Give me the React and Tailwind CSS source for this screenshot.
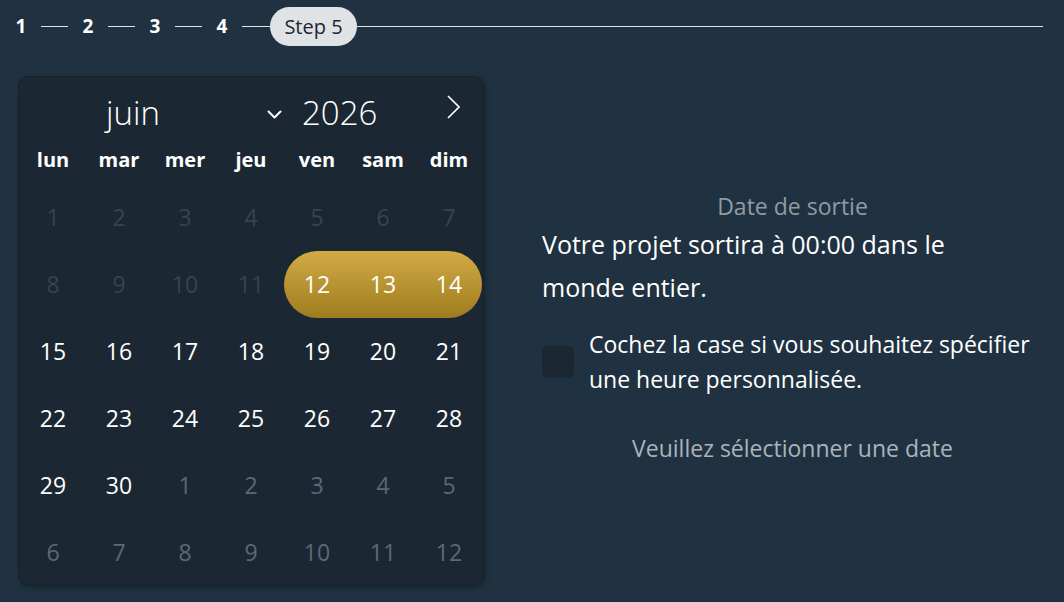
import React from "react";

const font = { fontFamily: "'Open Sans', 'Noto Sans', sans-serif" };

function ChevronDown() {
  return (
    <svg width="15" height="9" viewBox="0 0 15 9" fill="none">
      <path d="M1.5 1.5 L7.5 7.5 L13.5 1.5" stroke="white" strokeWidth="2" strokeLinecap="round" strokeLinejoin="round" />
    </svg>
  );
}
function ChevronRight() {
  return (
    <svg width="13" height="24" viewBox="0 0 13 24" fill="none">
      <path d="M1 1 L12 12 L1 23" stroke="white" strokeWidth="1.6" />
    </svg>
  );
}

const days = ["lun", "mar", "mer", "jeu", "ven", "sam", "dim"];

const rows = [
  [[1, "d"], [2, "d"], [3, "d"], [4, "d"], [5, "d"], [6, "d"], [7, "d"]],
  [[8, "d"], [9, "d"], [10, "d"], [11, "d"], [12, "s"], [13, "s"], [14, "s"]],
  [[15, "n"], [16, "n"], [17, "n"], [18, "n"], [19, "n"], [20, "n"], [21, "n"]],
  [[22, "n"], [23, "n"], [24, "n"], [25, "n"], [26, "n"], [27, "n"], [28, "n"]],
  [[29, "n"], [30, "n"], [1, "o"], [2, "o"], [3, "o"], [4, "o"], [5, "o"]],
  [[6, "o"], [7, "o"], [8, "o"], [9, "o"], [10, "o"], [11, "o"], [12, "o"]],
];

function Step({ n }) {
  return <span className="text-[19px] font-bold text-white w-[10px] flex justify-center">{n}</span>;
}
function Line() {
  return <span className="ml-[15px] mr-[15px] w-[27px] h-px bg-[#dfe3e6]" />;
}

export default function App() {
  return (
    <div style={font} className="w-[1064px] h-[602px] bg-[#203241] overflow-hidden">
      <div className="flex items-center pl-[16px] pr-[21px] pt-[7px] h-[46px]">
        <Step n="1" />
        <Line />
        <Step n="2" />
        <Line />
        <Step n="3" />
        <Line />
        <Step n="4" />
        <span className="ml-[15px] w-[28px] h-px bg-[#dfe3e6]" />
        <span className="h-[39px] w-[87px] justify-center rounded-full bg-[#dfe3e5] text-[#1c2630] text-[20px] font-medium flex items-center">Step 5</span>
        <span className="flex-1 h-px bg-[#dfe3e6]" />
      </div>
      <div className="flex pl-[18px] pr-[21px] mt-[30px]">
        <div className="w-[466px] h-[510px] bg-[#1b2833] rounded-[10px] border border-[#17212a] shadow-[2px_2px_6px_rgba(0,0,0,0.25)] px-[1px] pt-[13px] overflow-hidden">
          <div className="flex items-center h-[46px] text-white font-light text-[33px]">
            <span className="ml-[86px] w-[161px]">juin</span>
            <span className="w-[15px] mt-[2px] flex"><ChevronDown /></span>
            <span className="ml-[20px] w-[145px]">2026</span>
            <span className="-mt-[12px] flex"><ChevronRight /></span>
          </div>
          <div className="grid grid-cols-7 mt-[9px] h-[24px] items-center">
            {days.map((d) => (
              <span key={d} className="text-center text-white font-bold text-[20px]">{d}</span>
            ))}
          </div>
          <div className="mt-[15px] flex flex-col">
            {rows.map((r, i) => (
              <div key={i} className="grid grid-cols-7 h-[67px] relative">
                {i === 1 && (
                  <div className="absolute left-[264px] w-[198px] top-0 bottom-0 rounded-full bg-gradient-to-b from-[#d3ab45] to-[#9e7c1d]" />
                )}
                {r.map(([n, t], j) => (
                  <span
                    key={j}
                    className={
                      "relative flex items-center justify-center text-[23px] " +
                      (t === "d" ? "text-[#344550]" : t === "o" ? "text-[#5a6a74]" : "text-white")
                    }
                  >
                    {n}
                  </span>
                ))}
              </div>
            ))}
          </div>
        </div>
        <div className="flex-1 ml-[58px] flex flex-col justify-center pb-[8px] text-[23px]">
          <div className="text-center text-[#8f9ba5] leading-[30px]">Date de sortie</div>
          <div className="mt-[2px] text-white text-[25px] leading-[43px] max-w-[480px]">Votre projet sortira à 00:00 dans le monde entier.</div>
          <div className="flex items-center mt-[18px]">
            <span className="w-[32px] h-[32px] rounded-[5px] bg-[#1b2833] shrink-0" />
            <span className="ml-[15px] text-white leading-[35px]">Cochez la case si vous souhaitez spécifier une heure personnalisée.</span>
          </div>
          <div className="text-center text-[#a9b4bc] leading-[30px] mt-[36px]">Veuillez sélectionner une date</div>
        </div>
      </div>
    </div>
  );
}
